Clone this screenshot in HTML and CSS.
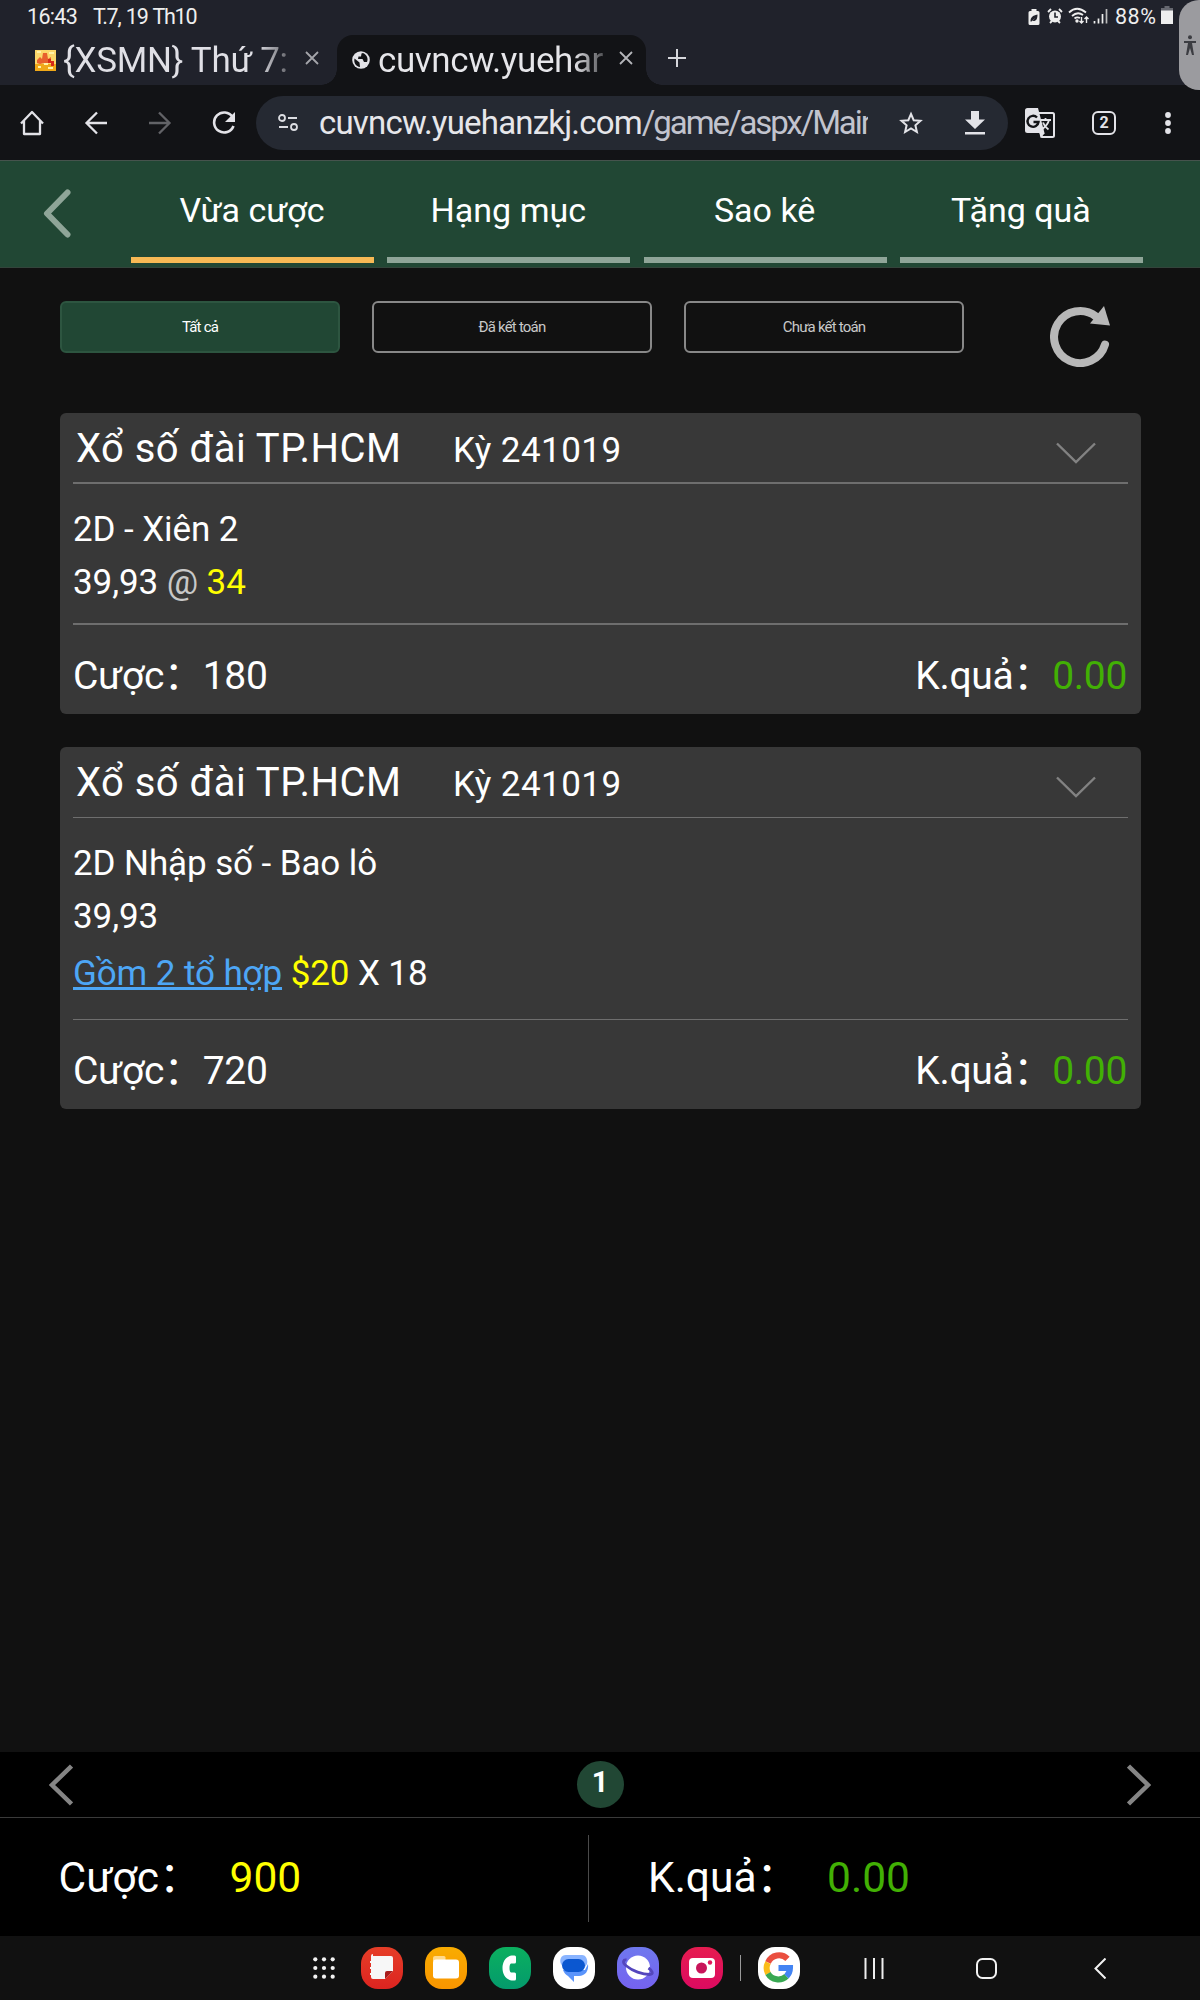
FILE: index.html
```html
<!DOCTYPE html>
<html lang="vi">
<head>
    <meta charset="UTF-8">
    <meta name="viewport" content="width=device-width, initial-scale=1.0">
    <title>Vừa cược</title>
    <link rel="stylesheet" href="styles.css">
</head>
<body>
<div class="screen">

    <!-- Status bar -->
    <div class="status-bar">
        <span class="clock">16:43</span>
        <span class="date">T.7, 19 Th10</span>
        <div class="status-icons">
            <svg class="ic-saver" width="12" height="18" viewBox="0 0 12 18"><path d="M3.500 1h5v2h1.500a1.500 1.500 0 0 1 1.500 1.500v11a1.500 1.500 0 0 1-1.500 1.500h-8a1.500 1.500 0 0 1-1.500-1.500v-11a1.500 1.500 0 0 1 1.500-1.500h1.500z" fill="#eee"/><path d="M2.500 13.500c0-4 2-6 7-7 0 4-1 7-5 6.500l3-3.500-4 4z" fill="#20222b"/></svg>
            <svg class="ic-alarm" width="16" height="16" viewBox="0 0 16 16"><circle cx="8" cy="8.500" r="6" fill="#eee"/><path d="M1 4l3-3M15 4l-3-3M3 15l2-2M13 15l-2-2" stroke="#eee" stroke-width="1.800"/><path d="M8 4.500V9h3" stroke="#20222b" stroke-width="1.600" fill="none"/></svg>
            <svg class="ic-wifi" width="22" height="18" viewBox="0 0 22 18" fill="none" stroke="#eee" stroke-width="1.800"><path d="M1 5.500Q9 -2 18 5.500M4 9Q9.500 4 15 8M6.500 11.500Q9 9.500 12 11"/><circle cx="9" cy="14" r=".8" fill="#eee"/><path d="M13.500 10v6M11.500 14l2 2 2-2M18.500 16v-6M16.500 12l2-2 2 2" stroke-width="1.400"/></svg>
            <svg class="ic-signal" width="16" height="16" viewBox="0 0 16 16" stroke="#eee" stroke-width="1.700"><path d="M1.500 13v2.500M5.500 10.500v5M9.500 6v9.500"/><path d="M13.500 1v14.500" stroke="#bbb"/></svg>
            <span class="percent">88%</span>
            <svg class="ic-battery" width="12" height="18" viewBox="0 0 12 18"><path d="M3.500 0h5v2H12v3H0V2h3.500z" fill="#666870"/><path d="M0 4.500h12V18H0z" fill="#eee"/></svg>
        </div>
    </div>

    <!-- Browser tabs -->
    <div class="tab-strip">
        <div class="browser-tab">
            <svg class="favicon" width="21" height="21" viewBox="0 0 21 21"><path d="M0 0h21v21H0z" fill="#fbd76a"/><path d="M0 14h21v7H0z" fill="#f0a818"/><path d="M2 10l3-3 2 2 1-6h4l1 6 3-2v6H9l-4 1-3-1z" fill="#e8602c"/><path d="M13 9h3v2h3v5h-3v-3h-3z" fill="#d42a18"/><path d="M2 2h4M14 3h5M9 14h4M3 17h3M13 18h5" stroke="#fff2a8" stroke-width="2"/></svg>
            <span class="browser-tab-title title-first">{XSMN} Thứ 7:</span>
            <svg class="close" width="14" height="14" viewBox="0 0 14 14" stroke="#a4a5aa" stroke-width="1.800"><path d="M1 1l12 12M13 1L1 13"/></svg>
        </div>
        <div class="browser-tab active">
            <svg class="globe" width="18" height="18" viewBox="0 0 18 18"><circle cx="9" cy="9" r="8.800" fill="#e3e3e8"/><path d="M2.500 7.500l5 4 .5 4.500c-4-.5-6.500-4-5.500-8.500zM9.500 2.500l-.5 3H6.500l-.500 2.500h4.500l1.500 3h3c1.500-3.500 0-7-4-9z" fill="#121316"/></svg>
            <span class="browser-tab-title title-active">cuvncw.yuehar</span>
            <svg class="close" width="14" height="14" viewBox="0 0 14 14" stroke="#b4b5b9" stroke-width="1.800"><path d="M1 1l12 12M13 1L1 13"/></svg>
        </div>
        <svg class="new-tab" width="18" height="18" viewBox="0 0 18 18" stroke="#d6d7dc" stroke-width="2"><path d="M9 0v18M0 9h18"/></svg>
    </div>

    <!-- Browser toolbar -->
    <div class="toolbar">
        <svg width="24" height="26" viewBox="0 0 24 26" fill="none" stroke="#e3e3e8" stroke-width="2.300"><path d="M1 13.500L12 2l11 11.500M4 11v13h16V11" stroke-linejoin="round"/></svg>
        <svg width="24" height="24" viewBox="0 0 24 24" fill="none" stroke="#e3e3e8" stroke-width="2.300"><path d="M23 12H3M13 1.500L2.500 12 13 22.500"/></svg>
        <svg width="24" height="24" viewBox="0 0 24 24" fill="none" stroke="#626367" stroke-width="2.300"><path d="M1 12h20M11 1.500L21.500 12 11 22.500"/></svg>
        <svg width="24" height="24" viewBox="0 0 24 24"><path d="M20.500 6A10 10 0 1 0 21.500 15" fill="none" stroke="#e3e3e8" stroke-width="2.600"/><path d="M23 1v10H13z" fill="#e3e3e8"/></svg>
        <div class="address">
            <svg width="20" height="17" viewBox="0 0 20 17" fill="none" stroke="#dcdde2" stroke-width="1.800"><circle cx="4" cy="4" r="3"/><path d="M10 4h9M1 13h9"/><circle cx="16" cy="13" r="3"/></svg>
            <span class="url">cuvncw.yuehanzkj.com<span class="path">/game/aspx/Main</span></span>
            <svg class="star" width="24" height="24" viewBox="0 0 24 24" fill="none" stroke="#e3e3e8" stroke-width="2"><path d="M12 3l2.700 6.200 6.800.6-5.100 4.500 1.500 6.700-5.900-3.500-5.900 3.500 1.500-6.700L2.500 9.800l6.800-.6z"/></svg>
            <svg class="download" width="20" height="24" viewBox="0 0 20 24" fill="#e3e3e8"><path d="M6 0h8v8.500h6l-10 9.500-10-9.500h6zM0 21h20v2.600H0z"/></svg>
        </div>
        <svg class="translate" width="30" height="30" viewBox="0 0 30 30"><path d="M12 5h15.500a1.500 1.500 0 0 1 1.500 1.500v21a1.500 1.500 0 0 1-1.500 1.500H17l-3-8" fill="none" stroke="#e3e3e8" stroke-width="2"/><path d="M2.500 0h10.500l6.500 25H2.500A2.500 2.500 0 0 1 0 22.500v-20A2.500 2.500 0 0 1 2.500 0z" fill="#e3e3e8"/><path d="M14.500 25h5.500l-4.500 5z" fill="#e3e3e8"/><path d="M12 9.500A5.500 5.500 0 1 0 13.500 14H8.500" fill="none" stroke="#121316" stroke-width="2.400"/><path d="M16 12h10M20.500 10v2M24 12c-1 4-4 7-6.500 9M18 14.500c1 3 3.500 5.500 5.500 7" fill="none" stroke="#e3e3e8" stroke-width="1.800"/></svg>
        <div class="tab-count">2</div>
        <svg class="more" width="8" height="24" viewBox="0 0 8 24" fill="#e3e3e8"><circle cx="4" cy="4" r="2.900"/><circle cx="4" cy="12" r="2.900"/><circle cx="4" cy="20" r="2.900"/></svg>
    </div>

    <!-- Page header -->
    <div class="header">
        <svg class="back" width="28" height="49" viewBox="0 0 28 49" fill="none" stroke="#8fa598" stroke-width="6" stroke-linecap="round" stroke-linejoin="round"><path d="M24.500 3.500L4 24.500l20.500 21"/></svg>
        <div class="menu">
            <div class="menu-item selected">Vừa cược</div>
            <div class="menu-item">Hạng mục</div>
            <div class="menu-item">Sao kê</div>
            <div class="menu-item">Tặng quà</div>
        </div>
    </div>

    <div class="content">
        <div class="filters">
            <div class="filter on">Tất cả</div>
            <div class="filter">Đã kết toán</div>
            <div class="filter">Chưa kết toán</div>
            <svg class="refresh" width="60" height="61" viewBox="0 0 60 61"><path d="M55 38.500A26 26 0 1 1 46 10.500" fill="none" stroke="#b8b8b8" stroke-width="8" stroke-linecap="round"/><path d="M54 0l6 19.500-20-2z" fill="#b8b8b8"/></svg>
        </div>

        <div class="card">
            <div class="card-head">
                <span class="game">Xổ số đài TP.HCM</span>
                <span class="period">Kỳ 241019</span>
                <svg class="arrow" width="40" height="22" viewBox="0 0 40 22" fill="none" stroke="#828282" stroke-width="2.400"><path d="M1 1.500l19 18.500L39 1.500"/></svg>
            </div>
            <div class="card-body">
                <div class="line">2D - Xiên 2</div>
                <div class="line">39,93 <span class="at">@</span> <span class="yellow">34</span></div>
            </div>
            <div class="card-foot">
                <span>Cược：180</span>
                <span>K.quả：<span class="green">0.00</span></span>
            </div>
        </div>

        <div class="card thin">
            <div class="card-head">
                <span class="game">Xổ số đài TP.HCM</span>
                <span class="period">Kỳ 241019</span>
                <svg class="arrow" width="40" height="22" viewBox="0 0 40 22" fill="none" stroke="#828282" stroke-width="2.400"><path d="M1 1.500l19 18.500L39 1.500"/></svg>
            </div>
            <div class="card-body">
                <div class="line">2D Nhập số - Bao lô</div>
                <div class="line">39,93</div>
                <div class="line combo"><a class="link">Gồm 2 tổ hợp</a> <span class="yellow">$20</span> X 18</div>
            </div>
            <div class="card-foot">
                <span>Cược：720</span>
                <span>K.quả：<span class="green">0.00</span></span>
            </div>
        </div>
    </div>

    <!-- Paging and totals -->
    <div class="pager">
        <svg width="24" height="42" viewBox="0 0 24 42" fill="none" stroke="#858585" stroke-width="4.500"><path d="M22.500 2L3 21l19.500 19"/></svg>
        <div class="page-number">1</div>
        <svg width="24" height="42" viewBox="0 0 24 42" fill="none" stroke="#858585" stroke-width="4.500"><path d="M1.500 2L21 21 1.500 40"/></svg>
    </div>
    <div class="totals">
        <div class="total bet"><span class="total-label">Cược：</span><span class="yellow">900</span></div>
        <div class="total result"><span class="total-label">K.quả：</span><span class="green">0.00</span></div>
    </div>

    <!-- Taskbar -->
    <div class="taskbar">
        <svg class="apps" width="22" height="22" viewBox="0 0 22 22" fill="#f2f2f2"><circle cx="2.300" cy="2.300" r="2.100"/><circle cx="11" cy="2.300" r="2.100"/><circle cx="19.700" cy="2.300" r="2.100"/><circle cx="2.300" cy="11" r="2.100"/><circle cx="11" cy="11" r="2.100"/><circle cx="19.700" cy="11" r="2.100"/><circle cx="2.300" cy="19.700" r="2.100"/><circle cx="11" cy="19.700" r="2.100"/><circle cx="19.700" cy="19.700" r="2.100"/></svg>
        <div class="app notes"><svg width="42" height="42" viewBox="0 0 42 42"><path d="M12 9h18a2 2 0 0 1 2 2v13l-8 8H12a2 2 0 0 1-2-2v-2H9v-2h1v-4H9v-2h1v-4H9v-2h1v-5a2 2 0 0 1 2-2z" fill="#f7f7f7"/><path d="M24 32v-6a2 2 0 0 1 2-2h6z" fill="#a81c1c"/></svg></div>
        <div class="app files"><svg width="42" height="42" viewBox="0 0 42 42"><path d="M10 9h9a1.500 1.500 0 0 1 1.500 1.500V14H8v-3a2 2 0 0 1 2-2z" fill="#ffd98a"/><rect x="8" y="12.500" width="26" height="19" rx="3" fill="#fff"/></svg></div>
        <div class="app phone"><svg width="42" height="42" viewBox="0 0 42 42"><path d="M24 8.500h1.500a1.500 1.500 0 0 1 1.500 1.500v5a1.500 1.500 0 0 1-1.500 1.500H22c-2 0-2 9 0 9h3.500a1.500 1.500 0 0 1 1.500 1.500v5a1.500 1.500 0 0 1-1.500 1.500H24c-14 0-14-25 0-25z" fill="#fff"/></svg></div>
        <div class="app messages"><svg width="42" height="42" viewBox="0 0 42 42"><path d="M13 8h16c4 0 6 5 5 9l-4 6H12l-4-6c-2-4 0-9 5-9z" fill="#8ab4ff"/><path d="M10 23h22l3-6c1 7-3 12-9 12h-5v6l-6-6c-2-1-4-3-5-6z" fill="#5a94fb"/><rect x="9" y="12" width="23" height="13" rx="6.500" fill="#0b57d0"/></svg></div>
        <div class="app internet"><svg width="42" height="42" viewBox="0 0 42 42"><circle cx="21" cy="20.500" r="12" fill="#fff"/><path d="M9.500 13c-3-.5-5 2 0 6 6 5 16 8.500 23 8.500 5 0 2.500-4-1-6.500" fill="none" stroke="#5446bd" stroke-width="2.800"/></svg></div>
        <div class="app camera"><svg width="42" height="42" viewBox="0 0 42 42"><rect x="8" y="11" width="26" height="20" rx="4" fill="#fff"/><circle cx="20.500" cy="21" r="5.500" fill="#c8145a"/><circle cx="29" cy="15.500" r="2.200" fill="#e0175b"/></svg></div>
        <div class="bar"></div>
        <div class="app google"><svg width="42" height="42" viewBox="0 0 42 42" fill="none" stroke-width="6"><path d="M29.500 11.800A12 12 0 0 0 10 15.500" stroke="#ea4f3f"/><path d="M10 15.500a12 12 0 0 0 0 11" stroke="#fbbc18"/><path d="M10 26.500a12 12 0 0 0 18.500 2.800" stroke="#38a852"/><path d="M28.500 29.300A12 12 0 0 0 32 21H20.500" stroke="#4384f3"/></svg></div>
        <svg class="recents" width="20" height="21" viewBox="0 0 20 21" stroke="#eee" stroke-width="2"><path d="M1.500 0v21M10 0v21M18.500 0v21"/></svg>
        <svg class="home" width="21" height="21" viewBox="0 0 21 21" fill="none" stroke="#f2f2f2" stroke-width="2"><rect x="1" y="1" width="19" height="19" rx="5.500"/></svg>
        <svg class="nav-back" width="12" height="21" viewBox="0 0 12 21" fill="none" stroke="#f2f2f2" stroke-width="2"><path d="M11.500.5l-10 10 10 10"/></svg>
    </div>

    <!-- Accessibility handle, floats over the browser -->
    <div class="handle">
        <svg width="12" height="20" viewBox="0 0 12 20" fill="#3c3d42"><circle cx="6" cy="2.200" r="2"/><path d="M0 6h12v2H8l2 12H8l-2-7-2 7H2L4 8H0z"/></svg>
    </div>
</div>
</body>
</html>
```
FILE: styles.css
```css
* {
    box-sizing: border-box;
}

body {
    margin: 0;
    background-color: #111;
    color: #fff;
    font-family: Roboto, "Noto Sans CJK SC", sans-serif;
}

svg {
    display: block;
    flex-shrink: 0;
}

.screen {
    position: relative;
    display: flex;
    flex-direction: column;
    width: 1200px;
    height: 2000px;
    overflow: hidden;
}

/* status bar */
.status-bar {
    display: flex;
    height: 35px;
    padding-left: 27px;
    background-color: #20222b;
    color: #eee;
    font-size: 21.5px;
    line-height: 33px;
    white-space: nowrap;
}

.clock {
    width: 66px;
    letter-spacing: -0.7px;
}

.date {
    letter-spacing: -1.3px;
    word-spacing: 1.5px;
}

.status-icons {
    display: flex;
    margin-left: auto;
    padding-right: 27px;
}

.ic-saver {
    margin: 8px 7px 0 0;
}

.ic-alarm {
    margin: 8px 5px 0 0;
}

.ic-wifi {
    margin: 7px 3px 0 0;
}

.ic-signal {
    margin: 8px 6px 0 0;
}

.percent {
    width: 46px;
    letter-spacing: 0.5px;
}

.ic-battery {
    margin-top: 6px;
}

/* browser tabs */
.tab-strip {
    display: flex;
    height: 50px;
    background-color: #20222b;
}

.browser-tab {
    display: flex;
    width: 337px;
    padding-left: 35px;
    line-height: 52px;
}

.browser-tab.active {
    position: relative;
    width: 309px;
    padding-left: 15px;
    background-color: #121316;
    border-radius: 16px 16px 0 0;
}

.browser-tab.active::before,
.browser-tab.active::after {
    content: "";
    position: absolute;
    bottom: 0;
    width: 16px;
    height: 16px;
}

.browser-tab.active::before {
    left: -16px;
    background: radial-gradient(circle at 0 0, transparent 15.5px, #121316 16px);
}

.browser-tab.active::after {
    right: -16px;
    background: radial-gradient(circle at 100% 0, transparent 15.5px, #121316 16px);
}

.browser-tab-title {
    color: transparent;
    font-size: 35px;
    white-space: nowrap;
    -webkit-background-clip: text;
    background-clip: text;
}

.title-first {
    width: 228px;
    margin-left: 7px;
    margin-right: 14px;
    letter-spacing: -0.3px;
    background-image: linear-gradient(90deg, #e0e0e6 85%, #6c6d73 98%);
}

.title-active {
    width: 233px;
    margin-left: 8px;
    margin-right: 8px;
    letter-spacing: -0.4px;
    background-image: linear-gradient(90deg, #e6e6ea 84%, #121316 102%);
}

.favicon {
    margin-top: 15px;
}

.globe {
    margin-top: 16px;
}

.close {
    margin-top: 16px;
}

.new-tab {
    margin: 14px 0 0 22px;
}

/* browser toolbar */
.toolbar {
    display: flex;
    align-items: center;
    gap: 40px;
    height: 75px;
    padding-left: 20px;
    background-color: #121316;
}

.address {
    display: flex;
    align-items: center;
    width: 752px;
    height: 54px;
    margin-left: -20px;
    padding-left: 22px;
    background-color: #252932;
    border-radius: 27px;
}

.url {
    width: 549px;
    margin-left: 21px;
    overflow: hidden;
    color: #e6e6ea;
    font-size: 33px;
    letter-spacing: -0.8px;
    line-height: 53px;
    white-space: nowrap;
}

.path {
    color: #c2c4ce;
    letter-spacing: -2.1px;
}

.star {
    margin-left: 31px;
}

.download {
    margin-left: 42px;
}

.translate {
    margin-left: -23px;
}

.tab-count {
    width: 24px;
    height: 24px;
    margin-left: -3px;
    border: 2.5px solid #e3e3e8;
    border-radius: 6px;
    color: #e3e3e8;
    font-size: 16px;
    font-weight: 700;
    line-height: 20px;
    text-align: center;
}

.more {
    margin-left: 8px;
}

/* page header */
.header {
    display: flex;
    height: 108px;
    padding-left: 43px;
    background-color: #214734;
    border-top: 1px solid #46534d;
    border-bottom: 1px solid #33443b;
}

.back {
    margin-top: 28px;
}

.menu {
    display: grid;
    grid-template-columns: repeat(4, 243px);
    column-gap: 13.3px;
    margin-left: 60px;
}

.menu-item {
    height: 102px;
    border-bottom: 6px solid #8fa598;
    font-size: 34px;
    line-height: 98px;
    text-align: center;
    text-indent: -1px;
}

.menu-item.selected {
    border-bottom-color: #f7b955;
}

/* content */
.content {
    flex: 1;
    padding: 33px 59px 0 60px;
}

.filters {
    display: flex;
    gap: 32px;
    margin-bottom: 60px;
}

.filter {
    width: 280px;
    height: 52px;
    border: 2px solid #888;
    border-radius: 6px;
    color: #c8c8c8;
    font-size: 15px;
    letter-spacing: -0.8px;
    line-height: 48px;
    text-align: center;
}

.filter.on {
    background-color: #214734;
    border-color: #2d5540;
    color: #fff;
}

.refresh {
    margin: 5px 0 -15px 54px;
}

.card {
    margin-bottom: 33px;
    padding: 0 13px;
    background-color: #383838;
    border-radius: 6px;
}

.card-head {
    display: flex;
    align-items: baseline;
    height: 71px;
    padding-left: 3px;
    border-bottom: 2px solid #6e6e6e;
    line-height: 71px;
}

.game {
    width: 377px;
    font-size: 40px;
    letter-spacing: 0.45px;
}

.period {
    font-size: 35px;
    letter-spacing: 0.45px;
}

.arrow {
    align-self: flex-start;
    margin: 29px 32px 0 auto;
}

.card-body {
    padding: 18.5px 0 14.5px;
    border-bottom: 2px solid #6e6e6e;
    font-size: 35px;
    letter-spacing: -0.1px;
}

.line {
    line-height: 53px;
}

.line.combo {
    line-height: 61px;
}

.card.thin .card-head,
.card.thin .card-body {
    border-bottom-width: 1px;
}

.card.thin .card-body {
    padding-bottom: 15.5px;
}

.card-foot {
    display: flex;
    justify-content: space-between;
    height: 89px;
    padding: 26px 1px 0 0;
    font-size: 39px;
    letter-spacing: -0.3px;
    line-height: 51px;
}

.at {
    color: #c8c8c8;
}

.yellow {
    color: #ff0;
}

.green {
    color: #42b004;
}

.link {
    color: #4da6f5;
    text-decoration: underline;
}

/* paging and totals */
.pager {
    display: flex;
    justify-content: space-between;
    align-items: center;
    height: 66px;
    padding: 0 49px;
    background-color: #000;
    border-bottom: 1px solid #3a3a3a;
}

.page-number {
    width: 47px;
    height: 47px;
    border-radius: 50%;
    background-color: #214734;
    font-size: 29px;
    font-weight: 700;
    line-height: 43px;
    text-align: center;
}

.totals {
    display: flex;
    height: 118px;
    padding-top: 17px;
    background-color: #000;
    font-size: 42.5px;
    line-height: 86px;
}

.total {
    display: flex;
    height: 87px;
}

.bet {
    width: 589px;
    padding-left: 58.5px;
    border-right: 1px solid #4a4a4a;
}

.result {
    padding-left: 59px;
}

.total-label {
    margin-right: 28px;
}

/* taskbar */
.taskbar {
    display: flex;
    align-items: center;
    height: 64px;
    padding-left: 313px;
    background-color: #111;
}

.app {
    width: 42px;
    height: 42px;
    margin-right: 22px;
    border-radius: 17px;
}

.apps {
    margin-right: 26px;
}

.notes {
    background: linear-gradient(#e63e28, #dc2420);
}

.files {
    background: linear-gradient(#f9ac00, #f99500);
}

.phone {
    background: linear-gradient(#0bb05f, #049a6c);
}

.messages,
.google {
    background-color: #fff;
}

.internet {
    background: linear-gradient(#6f78ee, #7562f0);
}

.camera {
    background: linear-gradient(#e61c50, #dc0a60);
}

.bar {
    width: 1px;
    height: 26px;
    margin: 0 17px 0 -5px;
    background-color: #999;
}

.recents {
    margin-left: 42px;
}

.home {
    margin-left: 92px;
}

.nav-back {
    margin-left: 97px;
}

/* accessibility handle */
.handle {
    position: absolute;
    top: 0;
    right: 0;
    width: 21px;
    height: 90px;
    padding: 35px 0 0 5px;
    background-color: #9b9b9f;
    border-radius: 20px 0 0 20px;
}
```
